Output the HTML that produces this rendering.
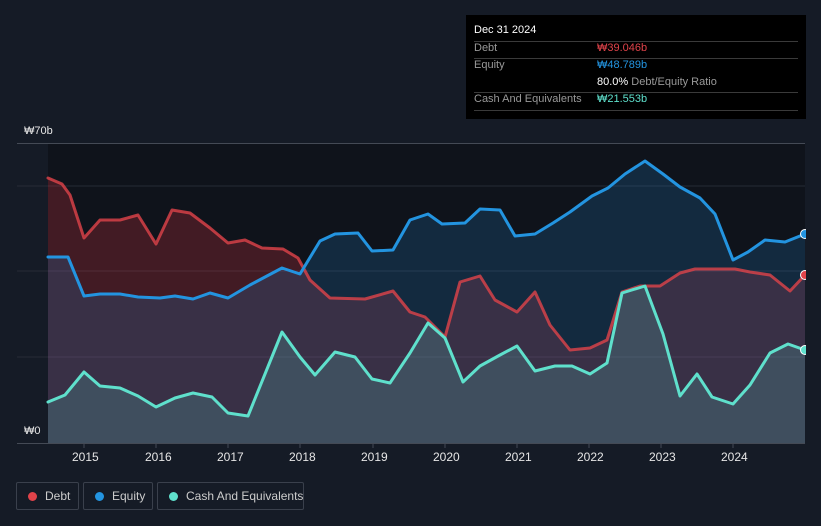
<!DOCTYPE html>
<html><head><meta charset="utf-8"><style>
html,body{margin:0;width:821px;height:526px;overflow:hidden}
body{background:#151b26;font-family:"Liberation Sans","Noto Sans CJK KR",sans-serif;position:relative}
.t{position:absolute;color:#e6e6e6;font-size:11px;white-space:nowrap}
.tip{position:absolute;left:466px;top:15px;width:340px;height:104px;background:#000;}
.tip div{position:absolute;font-size:11px;white-space:nowrap}
.hr{position:absolute;left:8px;width:324px;height:1px;background:#3a3a3a}
.leg{position:absolute;top:482px;height:28px;border:1px solid #3a404c;border-radius:2px;color:#ccc;font-size:12px;line-height:26px;box-sizing:border-box;white-space:nowrap}
.leg i{position:absolute;left:11px;top:9px;width:9px;height:9px;border-radius:50%}
</style></head><body>
<svg width="821" height="526" style="position:absolute;left:0;top:0">
<rect x="48" y="143" width="757" height="300" fill="#0f131b"/>
<g stroke="#262b36" stroke-width="1">
<line x1="17" y1="186" x2="805" y2="186"/><line x1="17" y1="271" x2="805" y2="271"/><line x1="17" y1="357" x2="805" y2="357"/>
</g>
<line x1="17" y1="143.5" x2="805" y2="143.5" stroke="#444a55"/>
<line x1="17" y1="443.5" x2="805" y2="443.5" stroke="#444a55"/>
<g stroke="#444a55"><line x1="84" y1="443" x2="84" y2="448"/><line x1="156" y1="443" x2="156" y2="448"/><line x1="228" y1="443" x2="228" y2="448"/><line x1="300" y1="443" x2="300" y2="448"/><line x1="373" y1="443" x2="373" y2="448"/><line x1="445" y1="443" x2="445" y2="448"/><line x1="517" y1="443" x2="517" y2="448"/><line x1="589" y1="443" x2="589" y2="448"/><line x1="661" y1="443" x2="661" y2="448"/><line x1="733" y1="443" x2="733" y2="448"/></g>
<polygon fill="rgba(200,50,60,0.28)" points="48,443 48,178 62,184 70,195 84,238 100,220 120,220 138,215 156,244 172,210 190,213 210,228 228,243 245,240 262,248 283,249 298,258 310,280 330,298 365,299 393,291 410,312 425,317 445,337 460,282 480,276 495,300 517,312 535,292 550,325 570,350 590,348 607,340 622,292 640,286 660,286 680,273 695,269 735,269 750,272 770,275 790,291 805,275 805,443"/>
<polygon fill="rgba(30,110,170,0.25)" points="48,443 48,257 68,257 84,296 100,294 120,294 138,297 160,298 175,296 193,299 210,293 228,298 250,285 282,268 300,274 320,241 335,234 358,233 372,251 393,250 410,220 428,214 442,224 465,223 480,209 500,210 515,236 535,234 553,223 570,212 592,196 608,188 625,174 645,161 663,174 680,187 700,198 715,214 733,260 748,252 765,240 785,242 805,234 805,443"/>
<polygon fill="rgba(90,200,190,0.2)" points="48,443 48,402 65,395 84,372 100,386 120,388 138,396 156,407 175,398 193,393 212,397 228,413 248,416 265,374 282,332 300,357 315,375 335,352 355,357 372,379 390,383 410,353 428,323 445,338 463,382 480,366 500,355 517,346 535,371 555,366 572,366 590,374 607,363 622,293 645,286 663,334 680,396 697,374 712,397 733,404 750,385 770,353 788,344 805,350 805,443"/>
<g fill="none" stroke-width="3" stroke-linejoin="round" stroke-linecap="round">
<polyline stroke="#e0434a" points="48,178 62,184 70,195 84,238 100,220 120,220 138,215 156,244 172,210 190,213 210,228 228,243 245,240 262,248 283,249 298,258 310,280 330,298 365,299 393,291 410,312 425,317 445,337 460,282 480,276 495,300 517,312 535,292 550,325 570,350 590,348 607,340 622,292 640,286 660,286 680,273 695,269 735,269 750,272 770,275 790,291 805,275" opacity="0.8"/>
<polyline stroke="#2394e0" points="48,257 68,257 84,296 100,294 120,294 138,297 160,298 175,296 193,299 210,293 228,298 250,285 282,268 300,274 320,241 335,234 358,233 372,251 393,250 410,220 428,214 442,224 465,223 480,209 500,210 515,236 535,234 553,223 570,212 592,196 608,188 625,174 645,161 663,174 680,187 700,198 715,214 733,260 748,252 765,240 785,242 805,234"/>
<polyline stroke="#5fe0cc" points="48,402 65,395 84,372 100,386 120,388 138,396 156,407 175,398 193,393 212,397 228,413 248,416 265,374 282,332 300,357 315,375 335,352 355,357 372,379 390,383 410,353 428,323 445,338 463,382 480,366 500,355 517,346 535,371 555,366 572,366 590,374 607,363 622,293 645,286 663,334 680,396 697,374 712,397 733,404 750,385 770,353 788,344 805,350"/>
</g>
<circle cx="805" cy="234" r="4.5" fill="#2394e0" stroke="#fff" stroke-width="1"/>
<circle cx="805" cy="275" r="4.5" fill="#e0434a" stroke="#fff" stroke-width="1"/>
<circle cx="805" cy="350" r="4.5" fill="#5fe0cc" stroke="#fff" stroke-width="1"/>
<rect x="806" y="143" width="15" height="305" fill="#151b26"/>
</svg>
<div class="t" style="left:24px;top:125px">₩70b</div>
<div class="t" style="left:24px;top:425px">₩0</div>
<div class="t" style="left:72px;top:450px;font-size:12px">2015</div>
<div class="t" style="left:145px;top:450px;font-size:12px">2016</div>
<div class="t" style="left:217px;top:450px;font-size:12px">2017</div>
<div class="t" style="left:289px;top:450px;font-size:12px">2018</div>
<div class="t" style="left:361px;top:450px;font-size:12px">2019</div>
<div class="t" style="left:433px;top:450px;font-size:12px">2020</div>
<div class="t" style="left:505px;top:450px;font-size:12px">2021</div>
<div class="t" style="left:577px;top:450px;font-size:12px">2022</div>
<div class="t" style="left:649px;top:450px;font-size:12px">2023</div>
<div class="t" style="left:721px;top:450px;font-size:12px">2024</div>
<div class="tip">
<div style="left:8px;top:9px;color:#fff">Dec 31 2024</div>
<div class="hr" style="top:26px"></div>
<div style="left:8px;top:27px;color:#999">Debt</div>
<div style="left:131px;top:27px;color:#e0434a">₩39.046b</div>
<div class="hr" style="top:43px"></div>
<div style="left:8px;top:44px;color:#999">Equity</div>
<div style="left:131px;top:44px;color:#2394e0">₩48.789b</div>
<div style="left:131px;top:61px;color:#999"><b style="color:#fff;font-weight:normal">80.0%</b> Debt/Equity Ratio</div>
<div class="hr" style="top:77px"></div>
<div style="left:8px;top:78px;color:#999">Cash And Equivalents</div>
<div style="left:131px;top:78px;color:#5fe0cc">₩21.553b</div>
<div class="hr" style="top:95px"></div>
</div>
<div class="leg" style="left:16px;width:63px"><i style="background:#e0434a"></i><span style="position:absolute;left:28px">Debt</span></div>
<div class="leg" style="left:83px;width:70px"><i style="background:#2394e0"></i><span style="position:absolute;left:28px">Equity</span></div>
<div class="leg" style="left:157px;width:147px"><i style="background:#5fe0cc"></i><span style="position:absolute;left:28px">Cash And Equivalents</span></div>
</body></html>
